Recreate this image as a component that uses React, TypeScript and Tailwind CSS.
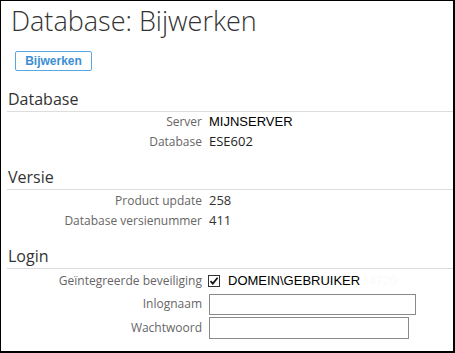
import React from "react";

const OS = "font-['Open_Sans',sans-serif]";
const AR = "font-['Liberation_Sans',Arial,sans-serif]";

function Heading({ children }: { children: React.ReactNode }) {
  return (
    <div className={`${OS} text-[16px] leading-[22px] text-[#333] pl-[1px] pb-[1px] border-b border-[#dddddd]`}>
      {children}
    </div>
  );
}

function Row({ label, children, h = "h-[20px]" }: { label: string; children: React.ReactNode; h?: string }) {
  return (
    <div className={`flex items-center ${h}`}>
      <div className={`${OS} w-[195px] shrink-0 text-right text-[12px] text-[#666] pr-0`}>{label}</div>
      <div className="ml-[7px] flex items-center">{children}</div>
    </div>
  );
}

export default function App() {
  return (
    <div className="w-[455px] h-[353px] bg-white border-l border-t border-r-2 border-b-2 border-black box-border overflow-hidden">
      <div className="pl-[6px] pr-0">
        <div className={`${OS} font-light text-[27px] leading-[36px] text-[#333] pl-[4px] mt-[2px]`}>
          Database: Bijwerken
        </div>
        <div className="mt-[12px] pl-[8px]">
          <button className={`${AR} w-[77px] h-[20px] border border-[#5aa6df] rounded-[2px] text-[12px] font-bold text-[#3a8fd4] leading-none flex items-center justify-center bg-white`}>
            Bijwerken
          </button>
        </div>

        <div className="mt-[17px]">
          <Heading>Database</Heading>
          <div>
            <Row label="Server">
              <span className={`${AR} text-[13px] text-black`}>MIJNSERVER</span>
            </Row>
            <Row label="Database">
              <span className={`${OS} text-[13px] text-[#222]`}>ESE602</span>
            </Row>
          </div>
        </div>

        <div className="mt-[14px]">
          <Heading>Versie</Heading>
          <div className="pt-[1px]">
            <Row label="Product update">
              <span className={`${OS} text-[13px] text-[#333]`}>258</span>
            </Row>
            <Row label="Database versienummer">
              <span className={`${OS} text-[13px] text-[#333]`}>411</span>
            </Row>
          </div>
        </div>

        <div className="mt-[14px]">
          <Heading>Login</Heading>
          <div>
            <Row label="Geïntegreerde beveiliging" h="h-[23px]">
              <span className="w-[12px] h-[12px] border border-[#333] bg-white flex items-center justify-center -ml-[1px]">
                <svg width="10" height="10" viewBox="0 0 10 10">
                  <path d="M1.5 5.2 L3.8 7.6 L8.6 1.8" fill="none" stroke="#111" strokeWidth="1.7" />
                </svg>
              </span>
              <span className={`${AR} text-[13px] text-black ml-[8px]`}>DOMEIN\GEBRUIKER</span>
              <span className={`${OS} text-[12px] text-[#fafafa] ml-[2px]`}>14720</span>
            </Row>
            <Row label="Inlognaam" h="h-[24px]">
              <div className="w-[207px] h-[21px] border border-[#8a8a8a] bg-white" />
            </Row>
            <Row label="Wachtwoord" h="h-[24px]">
              <div className="w-[200px] h-[22px] border border-[#8a8a8a] bg-white" />
            </Row>
          </div>
        </div>
      </div>
    </div>
  );
}
